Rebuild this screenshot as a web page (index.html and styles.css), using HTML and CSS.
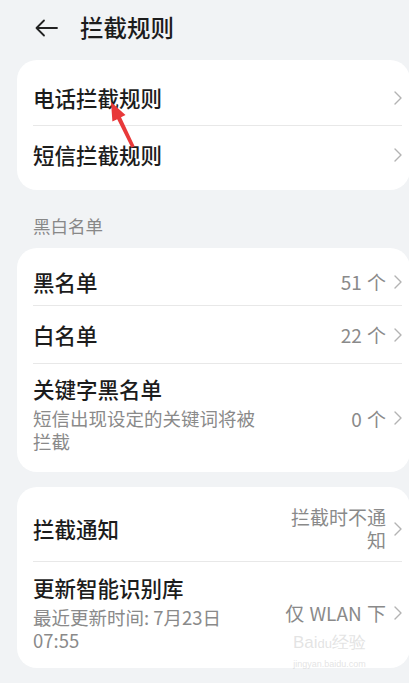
FILE: index.html
```html
<!DOCTYPE html>
<html lang="zh">
<head>
<meta charset="utf-8">
<title>拦截规则</title>
<link rel="stylesheet" href="styles.css">
</head>
<body>
<div class="page">
  <header class="topbar">
    <svg class="back" width="24" height="18" viewBox="0 0 24 18"><path d="M10 1.5 L2.5 9 L10 16.5 M2.5 9 H23" fill="none" stroke="#222" stroke-width="1.8" stroke-linecap="round" stroke-linejoin="round"/></svg>
    <h1 class="title">拦截规则</h1>
  </header>

  <section class="card card-rules">
    <div class="row row-first">
      <div class="main"><div class="label">电话拦截规则</div></div>
      <svg class="chev" width="8" height="14" viewBox="0 0 8 14"><path d="M1 1 L7 7 L1 13" fill="none" stroke="#b3b3b3" stroke-width="1.4" stroke-linecap="round" stroke-linejoin="round"/></svg>
    </div>
    <div class="row row-last-1">
      <div class="main"><div class="label">短信拦截规则</div></div>
      <svg class="chev" width="8" height="14" viewBox="0 0 8 14"><path d="M1 1 L7 7 L1 13" fill="none" stroke="#b3b3b3" stroke-width="1.4" stroke-linecap="round" stroke-linejoin="round"/></svg>
    </div>
  </section>

  <div class="section-title">黑白名单</div>

  <section class="card card-lists">
    <div class="row row-b1">
      <div class="main"><div class="label">黑名单</div></div>
      <div class="value">51 个</div>
      <svg class="chev" width="8" height="14" viewBox="0 0 8 14"><path d="M1 1 L7 7 L1 13" fill="none" stroke="#b3b3b3" stroke-width="1.4" stroke-linecap="round" stroke-linejoin="round"/></svg>
    </div>
    <div class="row row-b2">
      <div class="main"><div class="label">白名单</div></div>
      <div class="value">22 个</div>
      <svg class="chev" width="8" height="14" viewBox="0 0 8 14"><path d="M1 1 L7 7 L1 13" fill="none" stroke="#b3b3b3" stroke-width="1.4" stroke-linecap="round" stroke-linejoin="round"/></svg>
    </div>
    <div class="row row-b3">
      <div class="main">
        <div class="label">关键字黑名单</div>
        <div class="sub">短信出现设定的关键词将被拦截</div>
      </div>
      <div class="value">0 个</div>
      <svg class="chev" width="8" height="14" viewBox="0 0 8 14"><path d="M1 1 L7 7 L1 13" fill="none" stroke="#b3b3b3" stroke-width="1.4" stroke-linecap="round" stroke-linejoin="round"/></svg>
    </div>
  </section>

  <section class="card card-misc">
    <div class="row row-c1">
      <div class="main"><div class="label">拦截通知</div></div>
      <div class="value value-wrap">拦截时不通知</div>
      <svg class="chev" width="8" height="14" viewBox="0 0 8 14"><path d="M1 1 L7 7 L1 13" fill="none" stroke="#b3b3b3" stroke-width="1.4" stroke-linecap="round" stroke-linejoin="round"/></svg>
    </div>
    <div class="row row-c2">
      <div class="main">
        <div class="label">更新智能识别库</div>
        <div class="sub">最近更新时间: 7月23日 07:55</div>
      </div>
      <div class="value">仅 WLAN 下</div>
      <svg class="chev" width="8" height="14" viewBox="0 0 8 14"><path d="M1 1 L7 7 L1 13" fill="none" stroke="#b3b3b3" stroke-width="1.4" stroke-linecap="round" stroke-linejoin="round"/></svg>
    </div>
  </section>

  <svg class="annot" width="409" height="683" viewBox="0 0 409 683">
    <polygon points="111,102 125.5,115 121,117.3 134.6,146.2 131.4,147.8 117.2,119.2 112.4,121.4" fill="#e8393a"/>
  </svg>
  <div class="watermark">Bai<span class="wm-du">du</span>经验<br><span class="wm-url">jingyan.baidu.com</span></div>
</div>
</body>
</html>
```

FILE: styles.css
```css
html, body {
  margin: 0;
  padding: 0;
  background: #f1f3f5;
}
body {
  font-family: "Noto Sans CJK SC", "Noto Sans", sans-serif;
  color: #1c1c1c;
  overflow: hidden;
}
.page {
  position: relative;
  width: 409px;
  height: 683px;
  overflow: hidden;
}
.topbar {
  display: flex;
  align-items: center;
  height: 55px;
  padding-left: 34px;
  gap: 22px;
}
.back {
  display: block;
  margin-top: 1px;
}
.title {
  margin: 0;
  font-size: 23.5px;
  font-weight: 500;
  line-height: 1;
  color: #1c1c1c;
}
.card {
  margin-left: 17px;
  width: 393px;
  background: #ffffff;
  border-radius: 20px;
}
.card-rules {
  margin-top: 5px;
}
.row {
  display: flex;
  align-items: center;
  margin: 0 8px 0 16px;
  box-sizing: border-box;
  border-bottom: 1px solid #e8e8e8;
}
.row:last-child {
  border-bottom: none;
}
.main {
  flex: 1;
  min-width: 0;
}
.label {
  font-size: 21.5px;
  line-height: 28px;
  font-weight: 500;
  color: #1c1c1c;
}
.sub {
  font-size: 18.5px;
  line-height: 22.5px;
  color: #8a8a8a;
  width: 235px;
  margin-top: 4px;
}
.value {
  font-size: 19px;
  line-height: 23px;
  color: #8a8a8a;
  margin-right: 8px;
  text-align: right;
  white-space: nowrap;
  word-spacing: 1px;
}
.value-wrap {
  white-space: normal;
  width: 98px;
}
.chev {
  display: block;
  flex: none;
}
.row-first {
  height: 66px;
  padding-top: 10px;
}
.row-last-1 {
  height: 64px;
  padding-bottom: 6px;
}
.section-title {
  font-size: 17.5px;
  line-height: 24px;
  color: #888888;
  padding: 24px 0 0 33px;
  height: 34px;
  box-sizing: content-box;
}
.row-b1 {
  height: 58px;
  padding-top: 10px;
}
.row-b2 {
  height: 58px;
}
.row-b3 {
  padding: 11px 0 20px;
}
.row-b3 .value, .row-b3 .chev {
  margin-top: 9px;
}
.card-misc {
  margin-top: 15px;
}
.row-c1 {
  height: 75px;
  padding-top: 10px;
}
.row-c1 .value {
  margin-top: -2px;
}
.row-c2 {
  padding: 12px 0 17px;
}
.annot {
  position: absolute;
  left: 0;
  top: 0;
  pointer-events: none;
}
.watermark {
  position: absolute;
  left: 293px;
  top: 634px;
  font-family: "Liberation Sans", sans-serif;
  font-size: 17px;
  line-height: 18px;
  color: rgba(200, 200, 200, 0.5);
  text-align: center;
  pointer-events: none;
}
.wm-du {
  font-size: 13px;
}
.wm-url {
  font-size: 9px;
  line-height: 10px;
}
```
